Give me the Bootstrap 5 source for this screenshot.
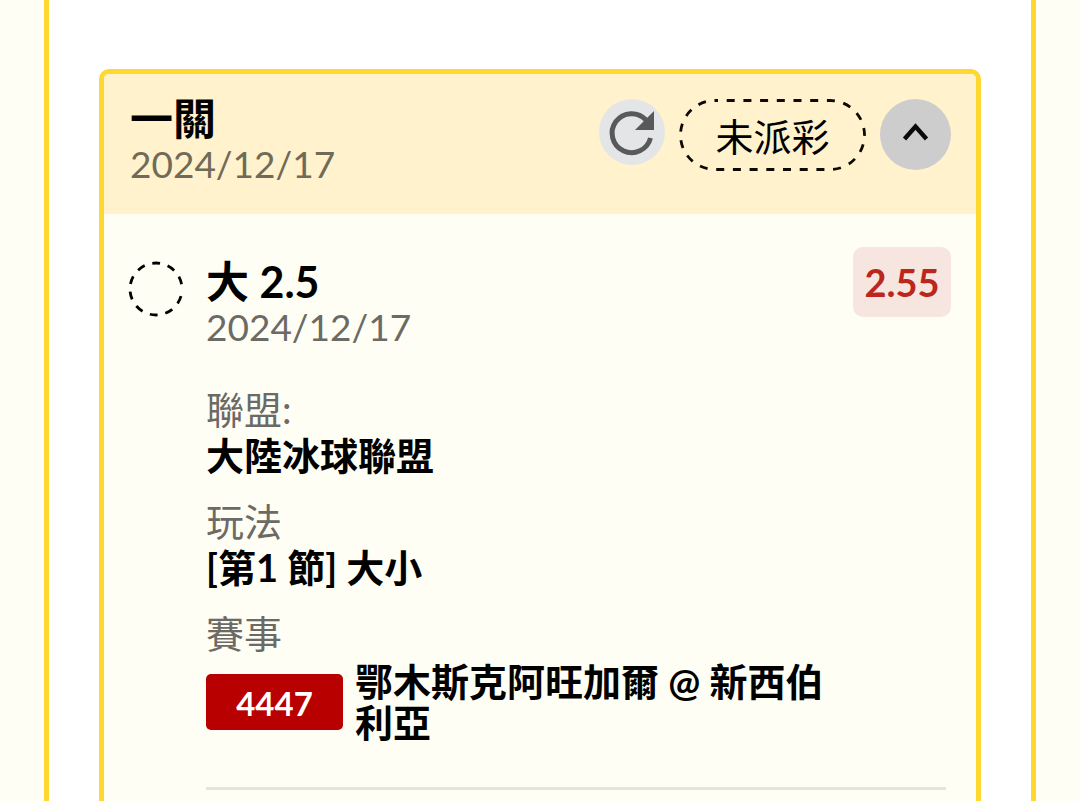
<!DOCTYPE html>
<html lang="zh-Hant">
<head>
<meta charset="utf-8">
<meta name="viewport" content="width=device-width, initial-scale=1">
<title>投注紀錄</title>
<link href="https://cdn.jsdelivr.net/npm/bootstrap@5.3.0/dist/css/bootstrap.min.css" rel="stylesheet">
<style>
  body { background: #fffef5; color: #000; font-family: Lato, "Noto Sans CJK TC", sans-serif; font-size: 38px; line-height: 46px; }
  .page-wrap { padding: 0 44px; }
  .slip-panel { background: #fff; border: solid #fed830; border-width: 0 5px; padding: 69px 50px 0; }
  .slip { background: #fffef5; border: 5px solid #fed830; border-bottom: 0; border-radius: 10px 10px 0 0; }
  .slip-head { background: #fff2cc; min-height: 140px; padding: 22px 25px 22px 26px; border-radius: 5px 5px 0 0; }
  .slip-body { padding: 33px 25px 0 24px; }
  .heading { font-size: 43px; line-height: 46px; font-weight: 700; margin: 0; }
  .muted { color: #6b6a65; }
  .date { font-size: 37px; line-height: 44px; }
  .slip-head .muted { color: #706a58; }
  .actions { gap: 14px; padding-top: 3px; }
  .round-btn { border: 0; border-radius: 50%; padding: 0; flex: none; }
  .reload { width: 66px; height: 66px; background: #e4e5e7; }
  .toggle { width: 71px; height: 71px; background: #cdcdcd; }
  .status { width: 187px; height: 72px; line-height: 75px; }
  .marker { width: 56px; height: 56px; margin: 14px 22px 0 0; }
  .odds { width: 98px; height: 70px; line-height: 71px; border-radius: 10px; background: #f6e6df; color: #bb271d; }
  .details { margin: 37px 0 0; }
  .details dt { font-weight: 400; }
  .details dd { font-weight: 700; margin: 0 0 20px; }
  .details .game { gap: 12px; padding-right: 100px; margin-top: 5px; }
  .game-no { width: 137px; height: 56px; line-height: 58px; border-radius: 5px; background: #b80000; color: #fff; font-size: 33px; }
  .teams { line-height: 41px; }
  .divider { border-top: 3px solid #e6e4dd; margin: 44px 5px 0 0; opacity: 1; }
</style>
</head>
<body>
<main class="page-wrap">
  <section class="slip-panel min-vh-100 d-flex flex-column">
    <article class="slip flex-grow-1">
      <header class="slip-head d-flex justify-content-between align-items-start">
        <div>
          <h1 class="heading">一關</h1>
          <div class="muted date">2024/12/17</div>
        </div>
        <div class="actions d-flex align-items-start">
          <button type="button" class="round-btn reload" aria-label="重新整理">
            <svg class="d-block" width="66" height="66" viewBox="0 0 66 66" aria-hidden="true">
              <path d="M47 21A19.500 19.500 0 1 0 51.500 39" fill="none" stroke="#58595b" stroke-width="5"/>
              <path d="M55 12V31H36Z" fill="#58595b"/>
            </svg>
          </button>
          <span class="status position-relative text-center">
            <svg class="position-absolute top-0 start-0" width="187" height="72" viewBox="0 0 187 72" aria-hidden="true">
              <rect x="1.500" y="1.500" width="184" height="69" rx="34.500" fill="none" stroke="#0c0a03" stroke-width="2.800" stroke-dasharray="8 8.700" stroke-dashoffset="5"/>
            </svg>
            未派彩
          </span>
          <button type="button" class="round-btn toggle" aria-label="收合" aria-expanded="true">
            <svg class="d-block" width="71" height="71" viewBox="0 0 71 71" aria-hidden="true">
              <path d="M24.500 40 35.500 27.500 46.500 40" fill="none" stroke="#0a0a0a" stroke-width="4.400"/>
            </svg>
          </button>
        </div>
      </header>
      <div class="slip-body d-flex">
        <svg class="marker flex-shrink-0" viewBox="0 0 56 56" aria-hidden="true">
          <circle cx="28" cy="28" r="26" fill="none" stroke="#000" stroke-width="2.800" stroke-dasharray="8 7.800" stroke-dashoffset="-7.300"/>
        </svg>
        <div class="flex-grow-1">
          <div class="d-flex justify-content-between align-items-start">
            <div class="pt-2 mt-1">
              <h2 class="heading">大 2.5</h2>
              <div class="muted date">2024/12/17</div>
            </div>
            <div class="odds text-center fw-bold">2.55</div>
          </div>
          <dl class="details">
            <dt class="muted">聯盟:</dt>
            <dd>大陸冰球聯盟</dd>
            <dt class="muted">玩法</dt>
            <dd>[第1 節] 大小</dd>
            <dt class="muted">賽事</dt>
            <dd class="game d-flex align-items-center">
              <span class="game-no flex-shrink-0 text-center">4447</span>
              <span class="teams">鄂木斯克阿旺加爾 @ 新西伯利亞</span>
            </dd>
          </dl>
          <hr class="divider">
        </div>
      </div>
    </article>
  </section>
</main>
<script src="https://cdn.jsdelivr.net/npm/bootstrap@5.3.0/dist/js/bootstrap.bundle.min.js"></script>
</body>
</html>
